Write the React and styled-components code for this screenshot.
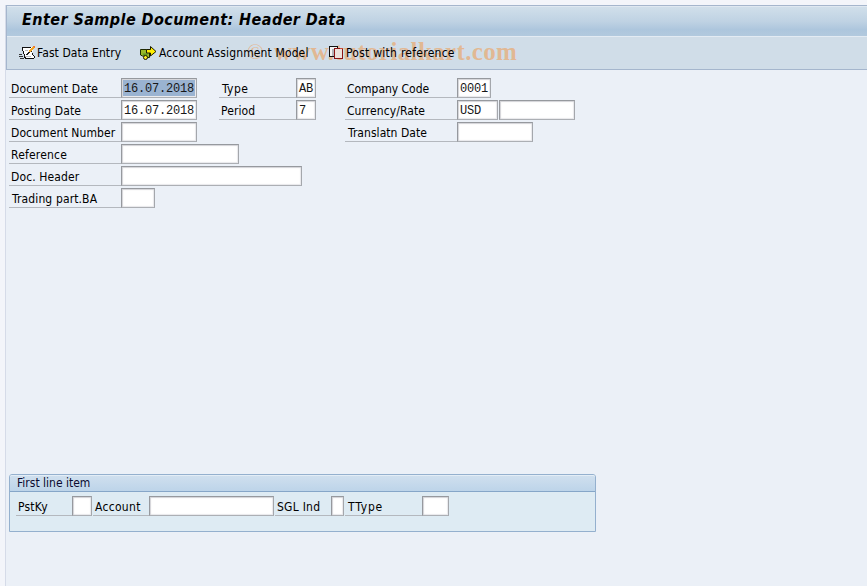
import React from 'react';
import styled, { createGlobalStyle } from 'styled-components';

const GlobalStyle = createGlobalStyle`
  * {
    box-sizing: border-box;
  }

  body {
    margin: 0;
    background: #f3f5fa;
    overflow: hidden;
  }
`;

const Window = styled.div`
  display: flex;
  flex-direction: column;
  width: 100vw;
  height: 100vh;
  padding: 5px 0 0 5px;
  font-family: 'DejaVu Sans Condensed', 'DejaVu Sans', sans-serif;
  font-stretch: condensed;
  font-size: 12px;
  color: #000;
  white-space: nowrap;
`;

const Screen = styled.div`
  flex: 1;
  display: flex;
  flex-direction: column;
  border-left: 1px solid #d5dbe8;
  background: #ebf0f7;
`;

const Header = styled.header`
  position: relative;
  height: 65px;
  border: 1px solid #a5b6cd;
  border-right: none;
  background: #d0dde8;
`;

const TitleBar = styled.h1`
  display: flex;
  align-items: center;
  height: 31px;
  margin: 0;
  padding: 0 0 5px 15px;
  border-top: 1px solid #dfe8f1;
  border-bottom: 1px solid #e3ebf3;
  background: linear-gradient(#d0dfea, #bfd2e3 50%, #adc6dd 78%, #b2c9de);
  font-size: 16px;
  font-weight: bold;
  font-style: italic;
  letter-spacing: 0.43px;
`;

const Toolbar = styled.nav`
  position: relative;
  z-index: 1;
  display: flex;
  align-items: center;
  height: 32px;
  padding-left: 12px;
`;

const ToolButton = styled.div`
  display: flex;
  align-items: center;
  width: ${(props) => props.$width}px;
  height: 20px;
  letter-spacing: ${(props) => props.$spacing || 0}px;

  svg {
    flex: none;
    margin-right: ${(props) => props.$gap || 1}px;
  }
`;

const Watermark = styled.div`
  position: absolute;
  left: 240px;
  top: 31px;
  display: flex;
  align-items: center;
  height: 30px;
  font-family: 'Liberation Serif', serif;
  font-size: 25px;
  font-weight: bold;
  letter-spacing: 0.36px;
  color: rgba(238, 160, 90, 0.6);
  pointer-events: none;
`;

const Copyright = styled.span`
  width: 27px;
  font-size: 22px;
  font-weight: normal;
`;

const Form = styled.div`
  display: flex;
  align-items: flex-start;
  height: 404px;
  padding: 8px 0 0 3px;
`;

const Column = styled.div`
  flex: none;
  width: ${(props) => props.$width}px;
  display: flex;
  flex-direction: column;
  gap: 2px;
`;

const Row = styled.div`
  display: flex;
  height: 20px;
`;

const Label = styled.label`
  flex: none;
  width: ${(props) => props.$width}px;
  height: 20px;
  padding-left: ${(props) => props.$indent || 2}px;
  border-bottom: 1px solid #b4b8be;
  line-height: 22px;
  letter-spacing: ${(props) => props.$spacing || 0}px;
`;

const Field = styled.div`
  flex: none;
  width: ${(props) => props.$width}px;
  height: 20px;
  margin-right: ${(props) => props.$after || 0}px;
  padding: 1px;
  border: 1px solid #96999e;
  border-right-color: #a4a7ac;
  border-bottom-color: #acafb4;
  background: #fff;
  box-shadow: inset 1px 1px 1px #d3d3d7, inset -1px -1px 1px #e8e8ec;
  font-family: 'Liberation Mono', monospace;
  font-size: 12px;
  line-height: 19px;
  letter-spacing: -0.2px;
  color: #181818;
`;

const FieldText = styled.span`
  display: block;
  height: 16px;
  padding-left: 1px;
  background: ${(props) => (props.$selected ? '#9ab3d1' : 'transparent')};
`;

const Group = styled.section`
  width: 587px;
  height: 58px;
  margin-left: 3px;
  border: 1px solid #94b0ce;
  border-radius: 3px 3px 0 0;
  background: #deebf3;
`;

const GroupTitle = styled.div`
  height: 17px;
  padding-left: 7px;
  border-top: 1px solid #e3edf6;
  border-bottom: 1px solid #86a6c8;
  border-radius: 2px 2px 0 0;
  background: linear-gradient(#cfdfee, #bdd4e9);
  line-height: 14px;
  color: #0a0a30;
`;

const GroupBody = styled.div`
  display: flex;
  padding: 4px 0 0 6px;
`;

const EditIcon = () => (
  <svg width='17' height='16' viewBox='0 0 17 16' shapeRendering='crispEdges'>
    <path d='M4 2h10v5h-1v3h2v3H5v-1h1V9H5V6H4z' fill='#fff' />
    <path d='M3 2h9v1H3zM3 3h1v3H3zM4 6h1v3H4zM5 9h1v3H5zM6 13h9v1H6zM15 11h1v2h-1zM14 10h1v1h-1zM13 8h1v2h-1zM5 12h2v1H5z' fill='#111' />
    <path d='M0 9h3v1H0zM0 11h4v1H0zM1 13h4v1H1z' fill='#333' />
    <path d='M6 5h3v1H6zM6 11h6v1H6z' fill='#b9bdc2' />
    <path d='M13 2h2v1h-2zM12 3h3v1h-3zM11 4h3v1h-3zM10 5h3v1h-3zM10 6h2v1h-2z' fill='#f5a623' />
    <path d='M14 1h2v1h-2zM15 2h1v1h-1z' fill='#f07830' />
    <path d='M9 7h2v1H9zM8 8h2v1H8zM7 9h2v1H7zM12 6h1v1h-1z' fill='#222' />
  </svg>
);

const AccountIcon = () => (
  <svg width='17' height='16' viewBox='0 0 17 16'>
    <path d='M0.500 4.500h6v3h3v5h-2.500l-1.500-1.500h-3l-2-1z' fill='#9aba28' stroke='#1d2800' />
    <path d='M2.500 8.500h5v2h-4z' fill='#5e9a20' />
    <path d='M6.500 4.500h4v-3l5.500 5-5.500 4.500v-3h-4z' fill='#ffee00' stroke='#1b1b00' />
    <circle cx='5.500' cy='12.500' r='2' fill='#ffed20' stroke='#1b1b00' />
  </svg>
);

const PostIcon = () => (
  <svg width='17' height='16' viewBox='0 0 17 16' shapeRendering='crispEdges'>
    <path d='M1 1h9v11H1z' fill='#111' />
    <path d='M2 2h7v9H2z' fill='#f4f4f4' />
    <path d='M4 4h2v7H4z' fill='#b4b4b8' />
    <path d='M6 3h9v11H6z' fill='#8c1414' />
    <path d='M7 4h7v9H7z' fill='#eee2dc' />
    <path d='M12 3h3v1h-3z' fill='#c84a3a' />
  </svg>
);

const mainFields = [
  { label: 'Document Date', width: 76, value: '16.07.2018', selected: true, spacing: 0.15 },
  { label: 'Posting Date', width: 76, value: '16.07.2018', spacing: 0.13 },
  { label: 'Document Number', width: 76, spacing: 0.1 },
  { label: 'Reference', width: 118, spacing: 0.2 },
  { label: 'Doc. Header', width: 181, spacing: 0.12 },
  { label: 'Trading part.BA', width: 34, indent: 3, spacing: 0.13 },
];

const periodFields = [
  { label: 'Type', width: 20, value: 'AB', indent: 3, spacing: 0.4 },
  { label: 'Period', width: 20, value: '7', spacing: 0.1 },
];

const companyFields = [
  { label: 'Company Code', width: 34, value: '0001', spacing: -0.03 },
  { label: 'Currency/Rate', width: 41, value: 'USD', extra: 76, spacing: 0.08 },
  { label: 'Translatn Date', width: 76, indent: 3, spacing: 0.05 },
];

const lineItemFields = [
  { label: 'PstKy', labelWidth: 56, width: 20, spacing: 0.2 },
  { label: 'Account', labelWidth: 56, width: 125, spacing: 0.3 },
  { label: 'SGL Ind', labelWidth: 56, width: 13, spacing: 0.25 },
  { label: 'TType', labelWidth: 77, width: 27, indent: 3, spacing: 0.8 },
];

const FieldRow = ({ field, labelWidth }) => (
  <Row>
    <Label $width={labelWidth} $indent={field.indent} $spacing={field.spacing}>
      {field.label}
    </Label>
    <Field $width={field.width} $after={1}>
      {field.value && <FieldText $selected={field.selected}>{field.value}</FieldText>}
    </Field>
    {field.extra && <Field $width={field.extra} />}
  </Row>
);

const FieldColumn = ({ fields, width, labelWidth }) => (
  <Column $width={width}>
    {fields.map((field) => (
      <FieldRow key={field.label} field={field} labelWidth={labelWidth} />
    ))}
  </Column>
);

const App = () => {
  return (
    <>
      <GlobalStyle />
      <Window>
        <Screen>
          <Header>
            <TitleBar>Enter Sample Document: Header Data</TitleBar>
            <Toolbar>
              <ToolButton $width={121} $spacing={0.08}>
                <EditIcon />
                Fast Data Entry
              </ToolButton>
              <ToolButton $width={188} $gap={2} $spacing={0.13}>
                <AccountIcon />
                Account Assignment Model
              </ToolButton>
              <ToolButton $width={130} $spacing={0.26}>
                <PostIcon />
                Post with reference
              </ToolButton>
            </Toolbar>
            <Watermark>
              <Copyright>©</Copyright>
              www.tutorialkart.com
            </Watermark>
          </Header>
          <Form>
            <FieldColumn fields={mainFields} width={210} labelWidth={112} />
            <FieldColumn fields={periodFields} width={126} labelWidth={77} />
            <FieldColumn fields={companyFields} width={240} labelWidth={112} />
          </Form>
          <Group>
            <GroupTitle>First line item</GroupTitle>
            <GroupBody>
              {lineItemFields.map((field) => (
                <FieldRow key={field.label} field={field} labelWidth={field.labelWidth} />
              ))}
            </GroupBody>
          </Group>
        </Screen>
      </Window>
    </>
  );
};

export default App;
